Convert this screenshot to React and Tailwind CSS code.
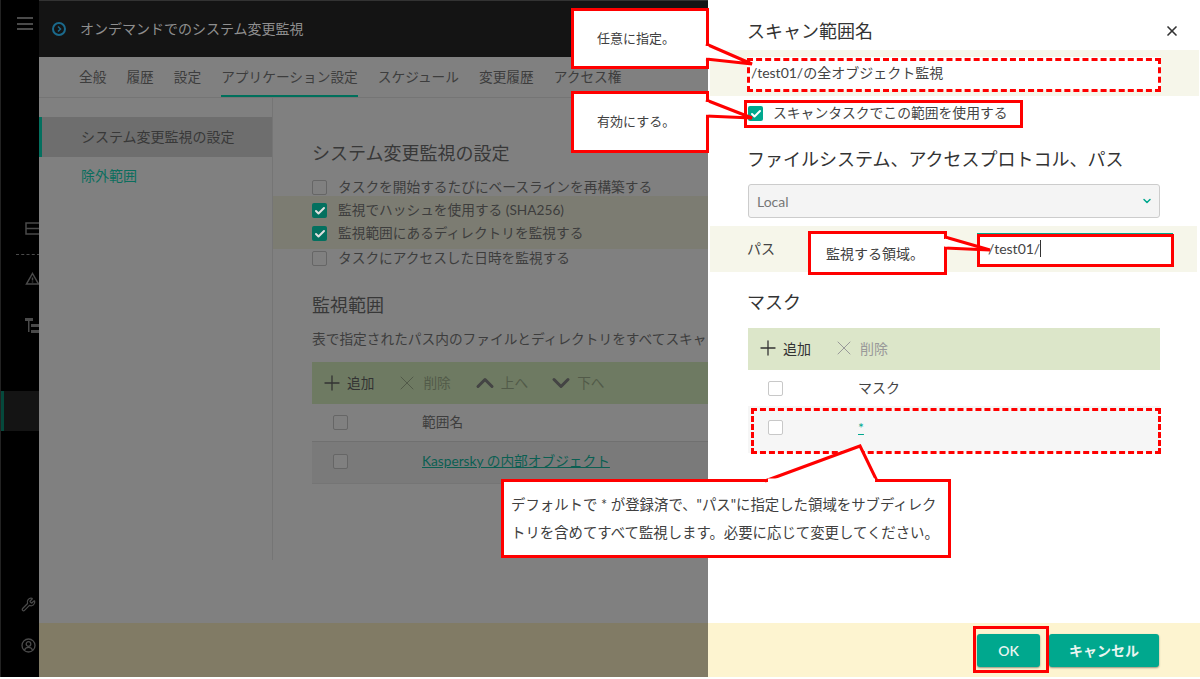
import React from 'react';
import { Plus, X, ChevronUp, ChevronDown, Check, Wrench } from 'lucide-react';

function Box({ checked }) {
  return checked ? (
    <span className="flex items-center justify-center w-[15px] h-[15px] rounded-[2px] bg-[#00a88e] shrink-0">
      <Check size={12} strokeWidth={4} className="text-white" />
    </span>
  ) : (
    <span className="block w-[15px] h-[15px] rounded-[2px] border border-[#c8c8c8] bg-white shrink-0" />
  );
}

function DimBox({ checked }) {
  return checked ? (
    <span className="flex items-center justify-center w-[15px] h-[15px] rounded-[2px] bg-[#04705f] shrink-0">
      <Check size={12} strokeWidth={4} className="text-[#e0e0e0]" />
    </span>
  ) : (
    <span className="block w-[15px] h-[15px] rounded-[2px] border border-[#666] bg-[#808080] shrink-0" />
  );
}

function Rail() {
  return (
    <div className="w-[39px] shrink-0 bg-black border-l border-[#222] flex flex-col overflow-hidden pt-[17px] pb-[24px]">
      <div className="ml-[16px] w-[16px] flex flex-col gap-[3.5px]">
        <span className="h-[2px] bg-[#4a4a4a]" />
        <span className="h-[2px] bg-[#4a4a4a]" />
        <span className="h-[2px] bg-[#4a4a4a]" />
      </div>
      {/* cut off by the panel, like in the screen */}
      <svg className="ml-[24px] mt-[192px] shrink-0" width="16" height="14" viewBox="0 0 16 14" fill="none" stroke="#4a4a4a" strokeWidth="1.5">
        <rect x="1" y="1" width="15" height="11" />
        <path d="M1 6.5h15" />
      </svg>
      <div className="ml-[15px] mt-[18px] w-[24px] border-t border-dashed border-[#4a4a4a]" />
      <svg className="ml-[24px] mt-[17px] shrink-0" width="15" height="13" viewBox="0 0 15 13" fill="none" stroke="#4a4a4a" strokeWidth="1.5">
        <path d="M7.5 1.5 13.5 12h-12z" />
        <path d="M7.5 5.5v3M7.5 9.5v1" />
      </svg>
      <svg className="ml-[24px] mt-[33px] shrink-0" width="15" height="16" viewBox="0 0 15 16" fill="#4a4a4a">
        <rect x="0" y="0" width="8" height="3" />
        <rect x="3" y="3" width="1.5" height="11" />
        <rect x="6" y="6" width="9" height="3" />
        <rect x="6" y="12" width="9" height="3" />
      </svg>
      <div className="mt-[57px] h-[40px] bg-[#141414] border-l-[3px] border-[#05493c] shrink-0" />
      <div className="mt-auto ml-[20px]">
        <Wrench size={15} strokeWidth={2} className="text-[#4a4a4a]" />
      </div>
      <svg className="ml-[20px] mt-[26px] shrink-0" width="15" height="15" viewBox="0 0 15 15" fill="none" stroke="#4a4a4a" strokeWidth="1.3">
        <circle cx="7.5" cy="7.5" r="6.5" />
        <circle cx="7.5" cy="6" r="2.3" />
        <path d="M3.5 12c.8-2 2.2-2.6 4-2.6s3.2.6 4 2.6" />
      </svg>
    </div>
  );
}

function Background() {
  const tabs = ['全般', '履歴', '設定', 'アプリケーション設定', 'スケジュール', '変更履歴', 'アクセス権'];
  return (
    <div className="w-[669px] shrink-0 flex flex-col bg-[#808080] overflow-hidden">
      <div className="h-[57px] shrink-0 bg-[#141414] border-t border-[#333] flex items-center pl-[13px] gap-[14px]">
        <svg width="14" height="14" viewBox="0 0 14 14" fill="none" stroke="#1b6a8c" strokeWidth="2">
          <circle cx="7" cy="7" r="6" />
          <path d="M6 4.5 8.5 7 6 9.5" strokeWidth="1.5" />
        </svg>
        <span className="text-[14px] text-[#8f8f8f] pb-[2px]">オンデマンドでのシステム変更監視</span>
      </div>
      <div className="h-[41px] shrink-0 border-b border-[#757575] flex pl-[40px] gap-[20px] text-[13.7px] text-[#3d3d3d]">
        {tabs.map((t) => (
          <div
            key={t}
            className={`h-[40px] flex items-center whitespace-nowrap ${t === 'アプリケーション設定' ? 'border-y-[2px] border-t-transparent border-b-[#00705c]' : ''}`}
          >
            {t}
          </div>
        ))}
      </div>
      <div className="flex-1 flex min-h-0">
        <div className="w-[234px] h-[462px] shrink-0 border-r border-[#757575] pt-[19px] text-[14px]">
          <div className="h-[40px] flex items-center pl-[39px] pb-[2px] bg-[#6e6e6e] border-l-[3px] border-[#04705f] text-[#383838]">システム変更監視の設定</div>
          <div className="h-[40px] flex items-center pl-[42px] pb-[3px] text-[#0b6e5e]">除外範囲</div>
        </div>
        <div className="flex-1 min-w-0 pt-[42px] text-[13.7px] text-[#3d3d3d] whitespace-nowrap">
          <h2 className="pl-[39px] h-[26px] leading-[26px] text-[18px] font-normal text-[#383838]">システム変更監視の設定</h2>
          <div className="mt-[10px] pl-[39px] h-[23px] flex items-center gap-[11px]"><DimBox />タスクを開始するたびにベースラインを再構築する</div>
          <div className="bg-[#7c7c72] pt-[3px] pb-[4px] -my-[3px] pl-[39px]">
            <div className="h-[23px] flex items-center gap-[11px]"><DimBox checked />監視でハッシュを使用する (SHA256)</div>
            <div className="h-[23px] flex items-center gap-[11px]"><DimBox checked />監視範囲にあるディレクトリを監視する</div>
          </div>
          <div className="mt-[1px] pl-[39px] h-[23px] flex items-center gap-[11px]"><DimBox />タスクにアクセスした日時を監視する</div>
          <h2 className="mt-[22px] pl-[39px] h-[26px] leading-[26px] text-[18px] font-normal text-[#383838]">監視範囲</h2>
          <p className="mt-[11px] pl-[39px] h-[20px] leading-[20px]">表で指定されたパス内のファイルとディレクトリをすべてスキャンします。</p>
          <div className="mt-[13px] ml-[39px]">
            <div className="h-[42px] bg-[#6e7a62] flex items-center pl-[8px]">
              <Plus size={24} strokeWidth={1.3} className="text-[#333]" />
              <span className="ml-[3px] text-[#333]">追加</span>
              <X size={24} strokeWidth={1} className="ml-[21px] text-[#525a49]" />
              <span className="ml-[4px] text-[#525a49]">削除</span>
              <ChevronUp size={28} strokeWidth={2.6} className="ml-[20px] text-[#444]" />
              <span className="ml-[2px] text-[#525a49]">上へ</span>
              <ChevronDown size={28} strokeWidth={2.6} className="ml-[19px] text-[#444]" />
              <span className="ml-[2px] text-[#525a49]">下へ</span>
            </div>
            <div className="h-[38px] border-b border-[#707070] flex items-center pl-[21px]">
              <DimBox />
              <span className="ml-[74px]">範囲名</span>
            </div>
            <div className="h-[42px] bg-[#7a7a7a] border-b border-[#757575] flex items-center pl-[21px] pb-[3px]">
              <DimBox />
              <span className="ml-[74px] underline text-[#0b5f52]">Kaspersky の内部オブジェクト</span>
            </div>
          </div>
        </div>
      </div>
      <div className="h-[54px] shrink-0 bg-[#817b65]" />
    </div>
  );
}

function Drawer() {
  return (
    <div className="flex-1 min-w-0 bg-white flex flex-col text-[14px] text-[#444]">
      <div className="mt-[18px] h-[26px] pl-[39px] pr-[20px] flex items-center justify-between">
        <h2 className="text-[18px] font-normal text-[#333]">スキャン範囲名</h2>
        <X size={16} strokeWidth={2.5} className="text-[#333]" />
      </div>
      <div className="mt-[6px] h-[46px] ml-[2px] mr-[1px] bg-[#f6f6ea] flex items-center pl-[37px] pr-[38px]">
        <div className="w-full h-[33px] bg-white flex items-center pl-[4px] pb-[2px]">/test01/の全オブジェクト監視</div>
      </div>
      <div className="mt-[6px] h-[23px] pl-[40px] flex items-center gap-[10px] text-[13.8px]">
        <Box checked />
        スキャンタスクでこの範囲を使用する
      </div>
      <h2 className="mt-[21px] h-[26px] leading-[26px] pl-[39px] text-[18px] font-normal text-[#333]">ファイルシステム、アクセスプロトコル、パス</h2>
      <div className="mt-[12px] mx-[40px] h-[34px] bg-[#f4f4f4] border border-[#ccc] rounded-[3px] flex items-center justify-between pl-[8px] pr-[6px] text-[#777]">
        Local
        <ChevronDown size={12} strokeWidth={3} className="text-[#00a88e]" />
      </div>
      <div className="mt-[8px] h-[46px] ml-[2px] mr-[3px] bg-[#f6f6ea] flex items-center pl-[37px]">
        <span className="w-[230px] pb-[2px]">パス</span>
        <div className="w-[196px] h-[33px] bg-white border border-[#00a88e] flex items-center pl-[10px] pb-[2px]">
          /test01/<span className="w-px h-[17px] bg-[#333]" />
        </div>
      </div>
      <h2 className="mt-[17px] h-[26px] leading-[26px] pl-[39px] text-[18px] font-normal text-[#333]">マスク</h2>
      <div className="mt-[13px] mx-[40px]">
        <div className="h-[42px] bg-[#dce6c9] flex items-center pl-[8px] pb-[2px]">
          <Plus size={24} strokeWidth={1.3} className="text-[#333]" />
          <span className="ml-[3px] text-[#333]">追加</span>
          <X size={24} strokeWidth={1} className="ml-[21px] text-[#999]" />
          <span className="ml-[4px] text-[#999]">削除</span>
        </div>
        <div className="h-[36px] flex items-center pl-[20px]">
          <Box />
          <span className="ml-[75px] pb-[2px]">マスク</span>
        </div>
        <div className="h-[47px] bg-[#f6f6f6] flex items-center pl-[20px] pb-[5px]">
          <Box />
          <span className="ml-[75px] underline text-[#00a88e]">*</span>
        </div>
      </div>
      <div className="mt-auto h-[54px] bg-[#fdf4d0] flex items-center pl-[269px] gap-[9px]">
        <button className="w-[63px] h-[33px] rounded-[3px] bg-[#00a88e] text-[#e8f5f0] font-semibold shadow-[0_1px_2px_rgba(0,0,0,0.4)]">OK</button>
        <button className="w-[110px] h-[33px] rounded-[3px] bg-[#00a88e] text-[#e8f5f0] font-semibold shadow-[0_1px_2px_rgba(0,0,0,0.4)]">キャンセル</button>
      </div>
    </div>
  );
}

// red callouts pasted on top of the screenshot
function Annotations() {
  const callout = 'absolute bg-white border-[3px] border-[#ff0000] flex items-center text-[#404040]';
  const dashed = 'absolute border-[3px] border-dashed border-[#ff0000]';
  const solid = 'absolute border-[3px] border-[#ff0000]';
  return (
    <>
      <div className={`${dashed} left-[747px] top-[58px] w-[414px] h-[34px]`} />
      <div className={`${solid} left-[744px] top-[100px] w-[279px] h-[28px]`} />
      <div className={`${solid} left-[977px] top-[234px] w-[197px] h-[33px]`} />
      <div className={`${dashed} left-[751px] top-[408px] w-[410px] h-[46px]`} />
      <div className={`${solid} left-[973px] top-[626px] w-[76px] h-[47px]`} />

      <div className={`${callout} left-[571px] top-[8px] w-[138px] h-[61px] pl-[23px] text-[13px]`}>任意に指定。</div>
      <div className={`${callout} left-[571px] top-[91px] w-[138px] h-[62px] pl-[23px] text-[13px]`}>有効にする。</div>
      <div className={`${callout} left-[808px] top-[231px] w-[139px] h-[44px] pl-[15px] text-[14px]`}>監視する領域。</div>
      <div className={`${callout} left-[501px] top-[479px] w-[450px] h-[79px] pl-[7px] leading-[28px] text-[14.4px] whitespace-nowrap`}>
        <div>
          デフォルトで * が登録済で、"パス"に指定した領域をサブディレク<br />
          トリを含めてすべて監視します。必要に応じて変更してください。
        </div>
      </div>

      <svg className="absolute left-0 top-0 pointer-events-none" width="1200" height="679" fill="white" stroke="#ff0000" strokeWidth="3">
        <path d="M706 44 L752 64 L706 59" />
        <path d="M706 100 L752 118 L706 116" />
        <path d="M945 237 L990 250 L945 248" />
        <path d="M765 481 L860 446 L877 481" />
        <g stroke="white" strokeWidth="4">
          <path d="M706.5 46V57.5M706.5 102V114.5M945.5 239V246.5M768 480.5H875" />
        </g>
      </svg>
    </>
  );
}

export default function App() {
  return (
    <div className="relative w-[1200px] h-[679px] overflow-hidden bg-white font-['Lato','Noto_Sans_CJK_JP',sans-serif]">
      <div className="flex h-[677px]">
        <Rail />
        <Background />
        <Drawer />
      </div>
      <Annotations />
    </div>
  );
}
